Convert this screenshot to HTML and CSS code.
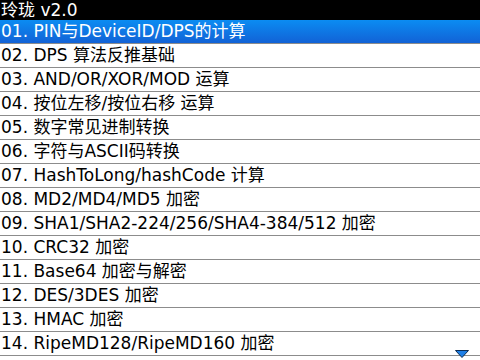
FILE: index.html
```html
<!DOCTYPE html>
<html lang="zh">
<head>
    <meta charset="utf-8">
    <title>玲珑 v2.0</title>
    <link rel="stylesheet" href="styles.css">
</head>
<body>
    <div class="screen">
        <div class="title_bar">玲珑 v2.0</div>

        <!-- Menu list -->
        <ul class="menu_list">
            <li class="menu_item selected">01. PIN与DeviceID/DPS的计算</li>
            <li class="menu_item">02. DPS 算法反推基础</li>
            <li class="menu_item">03. AND/OR/XOR/MOD 运算</li>
            <li class="menu_item">04. 按位左移/按位右移 运算</li>
            <li class="menu_item">05. 数字常见进制转换</li>
            <li class="menu_item">06. 字符与ASCII码转换</li>
            <li class="menu_item">07. HashToLong/hashCode 计算</li>
            <li class="menu_item">08. MD2/MD4/MD5 加密</li>
            <li class="menu_item">09. SHA1/SHA2-224/256/SHA4-384/512 加密</li>
            <li class="menu_item">10. CRC32 加密</li>
            <li class="menu_item">11. Base64 加密与解密</li>
            <li class="menu_item">12. DES/3DES 加密</li>
            <li class="menu_item">13. HMAC 加密</li>
            <li class="menu_item">14. RipeMD128/RipeMD160 加密</li>
        </ul>

        <svg class="scroll_arrow" width="14" height="8" viewBox="0 0 14 8">
            <polygon points="0.5,0.5 13.5,0.5 7,7.5" fill="#1e7fe6" stroke="#0b2d55" stroke-width="1"/>
        </svg>
    </div>
</body>
</html>
```

FILE: styles.css
```css
html, body {
    margin: 0;
    padding: 0;
    background: #ffffff;
}

.screen {
    position: relative;
    width: 480px;
    height: 360px;
    overflow: hidden;
    font-family: "DejaVu Sans", "Noto Sans CJK SC", sans-serif;
    font-size: 17px;
    color: #000000;
}

.title_bar {
    height: 20px;
    line-height: 20px;
    padding-left: 1px;
    background: #000000;
    color: #ffffff;
}

.menu_list {
    list-style: none;
    margin: 0;
    padding: 0;
}

.menu_item {
    height: 23px;
    line-height: 23px;
    padding-left: 1px;
    border-bottom: 1px solid #8c8c8c;
    white-space: nowrap;
}

.menu_item.selected {
    background: linear-gradient(to bottom, #0b8cf2, #1262d6);
    color: #ffffff;
}

.scroll_arrow {
    position: absolute;
    right: 11px;
    bottom: 2px;
}
```
